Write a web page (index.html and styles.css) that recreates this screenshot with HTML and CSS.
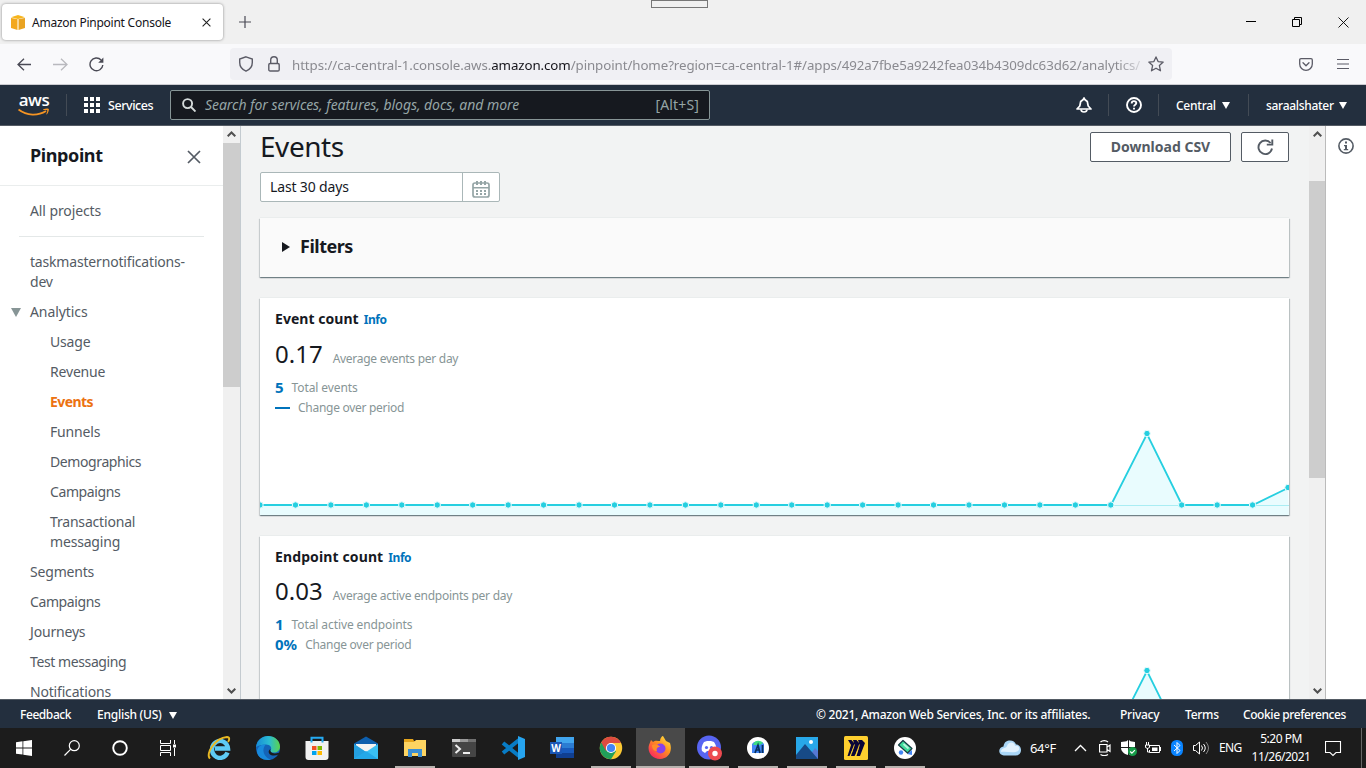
FILE: index.html
```html
<!DOCTYPE html>
<html lang="en">
<head>
<meta charset="utf-8">
<title>Amazon Pinpoint Console</title>
<link rel="stylesheet" href="styles.css">
</head>
<body>
<div class="tabs">
  <div class="tab">
    <svg class="cube" width="14" height="15" viewBox="0 0 14 15"><path d="M0 3v10l6.500 2V4z" fill="#f3a81c"/><path d="M14 3v10l-6.500 2V4z" fill="#e9a322"/><path d="M0 2.300 7 0l7 2.300L7 4z" fill="#f7b51d"/><path d="M6.500 4h1v11h-1z" fill="#fbdc96"/></svg>
    <span class="tab-title">Amazon Pinpoint Console</span>
    <svg width="9" height="9" viewBox="0 0 9 9"><path d="M.6.6l7.800 7.800M8.400.6.6 8.400" stroke="#222" stroke-width="1.100"/></svg>
  </div>
  <svg class="newtab" width="12" height="12" viewBox="0 0 12 12"><path d="M6 0v12M0 6h12" stroke="#4a4a55" stroke-width="1.200"/></svg>
  <div class="share"></div>
  <div class="winbtns">
    <svg width="11" height="11" viewBox="0 0 11 11"><path d="M0 4.500h10" stroke="#000"/></svg>
    <svg width="11" height="11" viewBox="0 0 11 11" fill="none" stroke="#000"><path d="M.5 2.500h7v7h-7zM2.500 2.500v-2h7v7h-2"/></svg>
    <svg width="11" height="11" viewBox="0 0 11 11"><path d="M.5.5l10 10M10.500.5l-10 10" stroke="#000" stroke-width=".9"/></svg>
  </div>
</div>
<div class="toolbar">
  <svg class="back" width="15" height="13" viewBox="0 0 15 13" fill="none" stroke="#4a4a55" stroke-width="1.300"><path d="M7 .8 1 6.500l6 5.700M1 6.500h13"/></svg>
  <svg class="fwd" width="15" height="13" viewBox="0 0 15 13" fill="none" stroke="#b9b9be" stroke-width="1.300"><path d="M8 .8l6 5.700-6 5.700M14 6.500H0"/></svg>
  <svg class="reload" width="15" height="15" viewBox="0 0 15 15" fill="none" stroke="#4a4a55" stroke-width="1.400"><path d="M13.800 8a6.400 6.400 0 1 1-1.700-5"/><path d="M14.400.6v5.200H9.200z" fill="#4a4a55" stroke="none"/></svg>
  <div class="url">
    <svg class="shield" width="16" height="16" viewBox="0 0 16 16" fill="none" stroke="#5b5b66" stroke-width="1.400"><path d="M8 .8 14.300 3v3.500c0 4-2.300 7-6.300 8.700C4 13.500 1.700 10.500 1.700 6.500V3z"/></svg>
    <svg class="lock" width="12" height="16" viewBox="0 0 12 16" fill="none" stroke="#5b5b66" stroke-width="1.400"><rect x=".8" y="7.500" width="10.400" height="7.500" rx="1.300"/><path d="M2.700 7.500V4a3.300 3.300 0 0 1 6.600 0v3.500"/></svg>
    <span class="address">https://ca-central-1.console.aws.<b>amazon.com</b>/pinpoint/home?region=ca-central-1#/apps/492a7fbe5a9242fea034b4309dc63d62/analytics/</span>
    <svg class="star" width="16" height="16" viewBox="0 0 16 16" fill="none" stroke="#5b5b66" stroke-width="1.300" stroke-linejoin="round"><path d="M8 .9l2.100 4.700 5.100.5-3.800 3.500 1.100 5.200L8 12.200l-4.500 2.600 1.100-5.200L.8 6.100l5.100-.5z"/></svg>
  </div>
  <svg class="pocket" width="14" height="13" viewBox="0 0 14 13" fill="none" stroke="#5b5b66" stroke-width="1.300" stroke-linecap="round" stroke-linejoin="round"><path d="M2 .7h10c.8 0 1.300.5 1.300 1.300v4a6.300 6.300 0 0 1-12.600 0V2C.7 1.200 1.200.7 2 .7z"/><path d="M4 4.800l3 3 3-3"/></svg>
  <svg class="menu" width="12" height="11" viewBox="0 0 12 11"><path d="M0 .5h12M0 5h12M0 9.500h12" stroke="#5b5b66" stroke-width="1.200"/></svg>
</div>
<header class="awsnav">
  <div class="logo"><span>aws</span><svg width="32" height="9" viewBox="0 0 32 9"><path d="M.5 1.500C9 8 20 8 28 3" fill="none" stroke="#f59423" stroke-width="1.800"/><path d="M25.200 1.300c3-1.200 5.400-.8 5.600-.3.300.7-.3 3.600-2 5.500l-.5-.2c.6-1.600 1.200-3.400.9-4-.4-.6-2.500-.4-4-.3z" fill="#f59423"/></svg></div>
  <i class="sep"></i>
  <svg class="grid" width="16" height="16" viewBox="0 0 16 16" fill="#fff"><path d="M0 0h4v4H0zM6 0h4v4H6zM12 0h4v4h-4zM0 6h4v4H0zM6 6h4v4H6zM12 6h4v4h-4zM0 12h4v4H0zM6 12h4v4H6zM12 12h4v4h-4z"/></svg>
  <span class="services">Services</span>
  <div class="search">
    <svg width="14" height="14" viewBox="0 0 14 14" fill="none" stroke="#d5dbdb" stroke-width="1.900"><circle cx="5.600" cy="5.600" r="4.500"/><path d="M9 9l4.500 4.500"/></svg>
    <em>Search for services, features, blogs, docs, and more</em><span class="hot">[Alt+S]</span>
  </div>
  <svg class="bell" width="16" height="16" viewBox="0 0 16 16" fill="none" stroke="#fff" stroke-width="1.700" stroke-linejoin="round"><path d="M1 12h14l-2.800-3-.9-4.500L9 2.800 8 1 7 2.800 4.700 4.500 3.800 9z"/><path d="M5 12.500c.3 3.300 5.700 3.300 6 0"/></svg>
  <i class="sep"></i>
  <svg class="help" width="16" height="16" viewBox="0 0 16 16" fill="none" stroke="#fff" stroke-width="1.900"><circle cx="8" cy="8" r="7"/><path d="M5.700 6.400c0-3 4.600-2.900 4.600-.3C10.300 7.800 8 7.600 8 9.600M8 10.800v1.700"/></svg>
  <i class="sep"></i>
  <span class="region">Central</span><svg class="tri" width="8" height="7"><path d="M0 0h8L4 7z" fill="#fff"/></svg>
  <i class="sep s4"></i>
  <span class="user">saraalshater</span><svg class="tri" width="8" height="7"><path d="M0 0h8L4 7z" fill="#fff"/></svg>
</header>
<main class="main">
  <nav class="side">
    <div class="side-head"><h2>Pinpoint</h2><svg width="14" height="14" viewBox="0 0 14 14"><path d="M1 1l12 12M13 1 1 13" stroke="#545b64" stroke-width="1.700"/></svg></div>
    <a class="all">All projects</a>
    <div class="rule"></div>
    <a class="project">taskmasternotifications-<br>dev</a>
    <a class="open"><svg width="10" height="9"><path d="M0 0h10L5 9z" fill="#879596"/></svg>Analytics</a>
    <a class="sub">Usage</a><a class="sub">Revenue</a><a class="sub current">Events</a><a class="sub">Funnels</a><a class="sub tight">Demographics</a><a class="sub tight">Campaigns</a><a class="sub">Transactional<br>messaging</a>
    <a>Segments</a><a class="tight">Campaigns</a><a>Journeys</a><a class="tight">Test messaging</a><a>Notifications</a>
  </nav>
  <div class="scroll scroll-left"><svg width="9" height="6" viewBox="0 0 9 6"><path d="M.7 5.300 4.500 1.500l3.800 3.800" fill="none" stroke="#505050" stroke-width="2"/></svg><div class="thumb"></div><svg width="9" height="6" viewBox="0 0 9 6"><path d="M.7.7l3.800 3.800L8.300.7" fill="none" stroke="#505050" stroke-width="2"/></svg></div>
  <section class="content">
    <div class="title-row"><h1>Events</h1><button class="btn csv">Download CSV</button><button class="btn refresh"><svg width="17" height="17" viewBox="0 0 17 17" fill="none" stroke="#545b64" stroke-width="1.900"><path d="M15 9.500A6.800 6.800 0 1 1 13.600 4"/><path d="M15.300.5v5.100h-5.500"/></svg></button></div>
    <div class="date"><span>Last 30 days</span><div class="cal"><svg width="18" height="17" viewBox="0 0 18 17"><path d="M3 2h12a2 2 0 0 1 2 2v10a2 2 0 0 1-2 2H3a2 2 0 0 1-2-2V4a2 2 0 0 1 2-2z" fill="none" stroke="#95a5a6" stroke-width="1.700"/><path d="M4 0h2v4H4zM8 0h2v4H8zM12 0h2v4h-2zM1 6h16v1.500H1zM4 9h2v2H4zM8 9h2v2H8zM12 9h2v2h-2zM4 12h2v2H4zM8 12h2v2H8zM12 12h2v2h-2z" fill="#95a5a6"/></svg></div></div>
    <div class="card filters"><svg width="8" height="10"><path d="M0 0l8 5-8 5z" fill="#16191f"/></svg><h3>Filters</h3></div>
    <div class="card metric">
      <div class="mhead"><b class="evt">Event count</b><a class="info">Info</a></div>
      <div class="big"><strong>0.17</strong><span class="avg1">Average events per day</span></div>
      <div class="row"><b>5</b><span class="tot1">Total events</span></div>
      <div class="row"><i class="dash"></i><span class="chg">Change over period</span></div>
      <svg class="chart" width="1029" height="90" viewBox="0 0 1029 90"><path d="M0 80H851L887 9 922 80h71L1028 63l1 27H0z" fill="#e9fcfe"/><path d="M851 80.500h71M993 80.500h36" stroke="#a9edf3"/><path d="M0 80H851L887 9 922 80h71l35-17" fill="none" stroke="#26cfe0" stroke-width="1.800"/><g id="dots" fill="#26cfe0" stroke="#e9fcfe" stroke-width="1"></g></svg>
    </div>
    <div class="card metric">
      <div class="mhead"><b class="end">Endpoint count</b><a class="info">Info</a></div>
      <div class="big"><strong>0.03</strong><span class="avg2">Average active endpoints per day</span></div>
      <div class="row"><b>1</b><span class="tot2">Total active endpoints</span></div>
      <div class="row"><b>0%</b><span class="chg">Change over period</span></div>
      <svg class="chart" width="1029" height="90" viewBox="0 0 1029 90"><path d="M0 79H851L887 8 922 79h107v11H0z" fill="#e9fcfe"/><path d="M0 79H851L887 8 922 79h107" fill="none" stroke="#26cfe0" stroke-width="1.800"/><circle cx="887" cy="7.500" r="3.200" fill="#26cfe0" stroke="#e9fcfe" stroke-width="1"/></svg>
    </div>
  </section>
  <div class="scroll scroll-right"><svg width="9" height="6" viewBox="0 0 9 6"><path d="M.7 5.300 4.500 1.500l3.800 3.800" fill="none" stroke="#505050" stroke-width="2"/></svg><div class="thumb"></div><svg width="9" height="6" viewBox="0 0 9 6"><path d="M.7.7l3.800 3.800L8.300.7" fill="none" stroke="#505050" stroke-width="2"/></svg></div>
  <aside class="rail"><svg width="16" height="16" viewBox="0 0 16 16"><circle cx="8" cy="8" r="7.100" fill="none" stroke="#545b64" stroke-width="1.600"/><path d="M7 3.500h2v2H7zM6 7h3v4h1.200v1.300H5.800V11H7V8.200H6z" fill="#545b64"/></svg></aside>
</main>
<footer class="foot"><span class="fb">Feedback</span><span class="lang">English (US)</span><svg class="tri" width="8" height="7"><path d="M0 0h8L4 7z" fill="#fff"/></svg><span class="copy">© 2021, Amazon Web Services, Inc. or its affiliates.</span><span class="priv">Privacy</span><span class="terms">Terms</span><span class="cookie">Cookie preferences</span></footer>
<div class="taskbar">
  <div class="sys"><svg width="16" height="16" viewBox="0 0 16 16" fill="#fff"><path d="M0 2.200 6.500 1.300v6.200H0zM7.300 1.200 16 0v7.500H7.300zM0 8.400h6.500v6.200L0 13.700zM7.300 8.400H16V16l-8.700-1.200z"/></svg></div>
  <div class="sys"><svg width="16" height="16" viewBox="0 0 16 16" fill="none" stroke="#fff" stroke-width="1.200"><circle cx="10.300" cy="5.700" r="5"/><path d="M6.800 9.200.5 15.500"/></svg></div>
  <div class="sys"><svg width="16" height="16" viewBox="0 0 16 16"><circle cx="8" cy="8" r="6.800" fill="none" stroke="#fff" stroke-width="1.900"/></svg></div>
  <div class="sys"><svg width="16" height="16" viewBox="0 0 16 16" fill="none" stroke="#fff"><path d="M.5 0v3.500h10V0M.5 16v-3.500h10V16M.5 5.500h10v5H.5zM14.500 0v4M14.500 8v8"/><path d="M13 4.500h3v3h-3z" fill="#fff" stroke="none"/></svg></div>
  <div class="apps">
    <div class="app"><svg width="24" height="24" viewBox="0 0 24 24"><path d="M20.500 16.500A8 8.500 0 1 1 21 12.500H8" fill="none" stroke="#5ecbf5" stroke-width="4.400"/><path d="M3 22.500C-2 18 8 2 20 1c3 0 2.500 3 1 5" fill="none" stroke="#e9b923" stroke-width="1.900"/></svg></div>
    <div class="app"><svg width="24" height="24" viewBox="0 0 24 24"><defs><linearGradient id="eg"><stop offset="0" stop-color="#168bd8"/><stop offset=".55" stop-color="#2bbcd2"/><stop offset="1" stop-color="#5bd34c"/></linearGradient></defs><circle cx="12" cy="12" r="12" fill="#1464b8"/><path d="M0 11C1 4 6 0 12 0c7 0 12 5 12 10.500 0 4-3 6-6 6-4 0-4-1.500-3-3 1-2-1-5-5-5-4 0-8 1-10 2.500z" fill="url(#eg)"/><path d="M1 16c0-5 4-8 9-7.500-4 3-4 12 5 15.200C8 25 2 22 1 16z" fill="#1889dc"/><path d="M14.500 13c-1 3 2 6 9 3.500l-1 2c-3 1.500-7 1.500-9-.5-1.500-2-1-4 1-5z" fill="#1b1b1b"/></svg></div>
    <div class="app"><svg width="24" height="24" viewBox="0 0 24 24"><path d="M6.500 6V1.700h11V6" fill="none" stroke="#25aaf2" stroke-width="2"/><path d="M.5 5h23v16a3 3 0 0 1-3 3h-17a3 3 0 0 1-3-3z" fill="#f1f1f1"/><path d="M5.500 5h2v1.500h-2zM16.500 5h2v1.500h-2z" fill="#25aaf2"/><path d="M7 10h4.500v4H7z" fill="#f25022"/><path d="M12.500 10H17v4h-4.500z" fill="#7fba00"/><path d="M7 15h4.500v4H7z" fill="#00a4ef"/><path d="M12.500 15H17v4h-4.500z" fill="#ffb900"/></svg></div>
    <div class="app"><svg width="24" height="24" viewBox="0 0 24 24"><path d="M0 7.500 12 .5l12 7V16H0z" fill="#0d5fae"/><path d="M2 8h20v9H2z" fill="#f3f3f3"/><path d="M0 8l12 8L24 8v15H0z" fill="#39bff3"/><path d="M0 8l12 8-12 7z" fill="#249fdf"/><path d="M0 23l12-8 12 8z" fill="#24a8e8"/></svg></div>
    <div class="app run"><svg width="24" height="24" viewBox="0 0 24 24"><path d="M1 3h9l1 2h12v15H1z" fill="#e6a51c"/><path d="M1 6h10l2-2h10v16H1z" fill="#fdd462"/><path d="M5 21v-8h14v8h-4v-4H9v4z" fill="#3b8fd4"/></svg></div>
    <div class="app"><svg width="24" height="24" viewBox="0 0 24 24"><rect y="3" width="24" height="18" rx="1" fill="#454545"/><path d="M0 3h8v3H0z" fill="#ccc"/><path d="M8 3h8v3H8z" fill="#999"/><path d="M16 3h8v3h-8z" fill="#707070"/><path d="M3.500 9l4.500 4-4.500 4M11 17h7" fill="none" stroke="#eee" stroke-width="2"/></svg></div>
    <div class="app"><svg width="24" height="24" viewBox="0 0 24 24"><path d="M18 4 2 17M18 20 2 7" stroke="#087cc5" stroke-width="4"/><path d="M17 0l7 3v18l-7 3z" fill="#26a4ef"/></svg></div>
    <div class="app"><svg width="24" height="24" viewBox="0 0 24 24"><path d="M6 1h18v6H6z" fill="#41a5ee"/><path d="M6 7h18v5H6z" fill="#2b7cd3"/><path d="M6 12h18v5H6z" fill="#185abd"/><path d="M6 17h18v5H6z" fill="#103f91"/><path d="M0 6h12v12H0z" fill="#1b57b6"/><text x="6" y="15.700" font-size="10" text-anchor="middle" font-weight="bold" fill="#fff">W</text></svg></div>
    <div class="app run"><svg width="24" height="24" viewBox="0 0 24 24"><circle cx="12" cy="12" r="11.200" fill="#fbc934"/><path d="M12 12 2.300 6.400A11.200 11.200 0 0 0 12 23.200l5-8z" fill="#21a05a"/><path d="M12 12 7 15 2.300 6.400A11.200 11.200 0 0 1 22 7H12z" fill="#dd4b3f"/><circle cx="12" cy="12" r="5.100" fill="#fff"/><circle cx="12" cy="12" r="4.100" fill="#4285f4"/></svg></div>
    <div class="app run active"><svg width="24" height="24" viewBox="0 0 24 24"><defs><linearGradient id="fg" x1="1" y1="0" x2=".2" y2="1"><stop offset="0" stop-color="#fff14a"/><stop offset=".45" stop-color="#ff951e"/><stop offset="1" stop-color="#fa2063"/></linearGradient></defs><path d="M3 4l2 2c2-2 5-1 7-1 0-3 2-5 3-5l3 5 4 2c3 9-2 16-10 16S-1 16 1 9z" fill="url(#fg)"/><circle cx="12.500" cy="12.500" r="5" fill="#8742e8"/><path d="M4 9c4-1 7 0 8 2-3 0-4 2-3 4-3 0-5-2-5-6z" fill="#ff8d2a"/></svg></div>
    <div class="app run"><svg width="26" height="26" viewBox="0 0 26 26"><circle cx="13" cy="12.500" r="12" fill="#5865f2"/><path d="M8 7l3-1h4l3 1c2 3 3 6 2 9l-3 2-2-2h-4l-2 2-3-2c-1-3 0-6 2-9z" fill="#fff"/><circle cx="10.500" cy="12.500" r="1.600" fill="#5865f2"/><circle cx="15.500" cy="12.500" r="1.600" fill="#5865f2"/><circle cx="19" cy="18.500" r="7" fill="#ed4a50"/><circle cx="19" cy="18.500" r="2.700" fill="#fff"/></svg></div>
    <div class="app run"><svg width="24" height="24" viewBox="0 0 24 24"><circle cx="12" cy="12" r="11" fill="#fff"/><path d="M6 8l2-2h8l2 2v9H6z" fill="#4285f4"/><path d="M8 7c1-3 7-3 9 0l-3 2H7z" fill="#3ddc84"/><path d="M9 17l3-8 2 8M10 14h4M16.500 9v8" fill="none" stroke="#07305d" stroke-width="1.700"/></svg></div>
    <div class="app run"><svg width="24" height="24" viewBox="0 0 24 24"><path d="M1 1h22v22H1z" fill="#28a8e9"/><path d="M12 23l8-11 3 3v8z" fill="#5679d3"/><path d="M1 19 10 8l13 15H1z" fill="#174a86"/><circle cx="16" cy="6" r="2" fill="#fff"/></svg></div>
    <div class="app run"><svg width="24" height="24" viewBox="0 0 24 24"><rect width="24" height="24" rx="1.500" fill="#ffd02f"/><path d="M4 4h3.500l2.500 3-1-3h3.500l2.500 3-1-3h4l3 3-5 13h-3.500l3-10-5 10H7l3-10-4.500 10H3.500L7 9z" fill="#090437"/><path d="M10.500 8.500 7.500 17M15.500 8.500 12.500 17" stroke="#ffd02f" stroke-width=".9"/></svg></div>
    <div class="app run"><svg width="24" height="24" viewBox="0 0 24 24"><circle cx="12" cy="12" r="11" fill="#fff"/><circle cx="8" cy="16.500" r="2.200" fill="#4285f4"/><path d="M14 18l5-4v5z" fill="#4285f4"/><path d="M10 4.500l9 8-4.500 4.500-9-8z" fill="#3ddc9b" stroke="#173c45" stroke-width="1.200" stroke-linejoin="round"/><path d="M10.500 8l5 4.500" stroke="#b5f5da" stroke-width="2"/></svg></div>
  </div>
  <div class="tray">
    <svg width="22" height="16" viewBox="0 0 22 16"><path d="M5 15.500a4.500 4.500 0 0 1-.5-9C5 2 8 .5 11 .5c3 0 5 1.500 6 4 3 0 5 2.500 5 5.500 0 3-2 5.500-5 5.500z" fill="#a9d6f7"/><path d="M2 12C2 7 7 9 8 6c2-5 8-4 8 0 3-1 5 1 4 4-3 4-12 1-18 2z" fill="#e1f2ff"/></svg>
    <span class="temp">64°F</span>
    <svg class="t1" width="13" height="8" viewBox="0 0 13 8"><path d="M1 7l5.500-5.500L12 7" fill="none" stroke="#fff" stroke-width="1.300"/></svg>
    <svg class="t2" width="12" height="16" viewBox="0 0 12 16" fill="none" stroke="#fff"><path d="M.5 4.500h7.500v7.500H.5zM8 7l3-2v6.500l-3-2M1.500 2c2-1.800 5.500-1.800 7.500 0M1.500 14.500c2 1.500 5.500 1.500 7.500 0" stroke-width="1.200"/></svg>
    <svg class="t3" width="16" height="16" viewBox="0 0 16 16"><path d="M7 0 5.500 1.200 0 2v5h7zM8 0v7h6V2L9.500 1.200zM0 8c0 3 3 6 7 7V8zM8 8h6l-3 5-3 2z" fill="#fff"/><circle cx="11.500" cy="11.500" r="4.500" fill="#169c48"/><path d="M9.200 11.500l1.700 1.700 3-3" fill="none" stroke="#fff" stroke-width="1.200"/></svg>
    <svg class="t4" width="16" height="12" viewBox="0 0 16 12" fill="none" stroke="#fff"><path d="M5 3.500h9.500v7h-10V8M15.500 5v4M1.500 0v3M3.500 0v3M.5 3h4v2.500l-2 1-2-1zM2.500 6v4h2"/><path d="M7 5.500h5.500v3.500H7z" fill="#fff" stroke="none"/></svg>
    <svg class="t5" width="12" height="16" viewBox="0 0 12 16"><rect width="12" height="16" rx="5.500" fill="#0a84ff"/><path d="M3 5l6 5.500L6 13.500v-11l3 3L3 11" fill="none" stroke="#fff"/></svg>
    <svg class="t6" width="17" height="14" viewBox="0 0 17 14" fill="none" stroke="#fff"><path d="M.5 4.500h2l4-3.500v12l-4-3.500h-2zM8.500 4.500q2 2.500 0 5M10.500 3q3.500 4 0 8"/><path d="M13 1q5 6 0 12" stroke="#888"/></svg>
    <span class="eng">ENG</span>
    <div class="clock"><span>5:20 PM</span><span class="day">11/26/2021</span></div>
    <svg class="t7" width="17" height="17" viewBox="0 0 17 17"><path d="M.5 1.500h15v11H11L8 15.500 5 12.500H.5z" fill="none" stroke="#fff" stroke-width="1.100"/></svg>
    <i class="peek"></i>
  </div>
</div>
<script src="chart.js"></script>
</body>
</html>
```
FILE: chart.js
```js
// Daily markers of the event count series.
const dots = document.getElementById("dots");
for (let day = 0; day < 30; day++) {
  const dot = document.createElementNS("http://www.w3.org/2000/svg", "circle");
  dot.setAttribute("cx", day === 25 ? 887 : day * 35.45);
  dot.setAttribute("cy", day === 25 ? 8.5 : day === 29 ? 62.5 : 80);
  dot.setAttribute("r", 3.2);
  dots.appendChild(dot);
}
```
FILE: styles.css
```css
* { box-sizing: border-box; }
body { margin: 0; width: 1366px; height: 768px; overflow: hidden; display: flex; flex-direction: column; font: 14px/20px "Noto Sans", sans-serif; color: #16191f; }
svg { display: block; flex: none; }
span, b, a, em { white-space: nowrap; }
h1, h2, h3 { margin: 0; }
.tabs { height: 44px; flex: none; background: #f0f0f0; display: flex; align-items: center; position: relative; }
.tab { width: 221px; height: 36px; margin-left: 2px; background: #fff; border-radius: 4px; box-shadow: 0 0 3px #888; display: flex; align-items: center; padding: 0 12px 0 9px; }
.tab-title { margin-left: 7px; width: 171px; font-size: 12px; color: #15141a; letter-spacing: -.24px; padding-top: 2px; }
.newtab { margin-left: 16px; }
.share { position: absolute; left: 651px; top: 0; width: 57px; height: 8px; border: 1px solid #777; }
.winbtns { margin-left: auto; display: flex; gap: 35px; margin-right: 17px; }
.toolbar { height: 41px; flex: none; background: #f9f9fb; border-bottom: 1px solid #ccccd1; display: flex; align-items: center; }
.back { margin-left: 17px; }
.fwd { margin-left: 21px; }
.reload { margin-left: 21px; }
.url { margin-left: 126px; width: 942px; height: 32px; border-radius: 4px; background: #f0f0f4; display: flex; align-items: center; padding: 0 8px; }
.lock { margin-left: 14px; }
.address { margin-left: 12px; width: 850px; overflow: hidden; color: #8a8a90; font-size: 13.300px; letter-spacing: -.08px; padding-top: 2px; mask-image: linear-gradient(to right, #000 825px, transparent 856px); }
.address b { color: #15141a; font-weight: 400; }
.star { margin-left: 6px; }
.pocket { margin-left: 127px; }
.menu { margin-left: 24px; }
.awsnav { height: 41px; flex: none; background: #232f3e; border-bottom: 1px solid #545b64; display: flex; align-items: center; color: #fff; font-size: 13px; font-weight: 500; }
.logo { margin-left: 18px; width: 32px; height: 24px; }
.logo span { display: block; font: 600 17px/13px "Open Sans", sans-serif; height: 15px; text-align: center; letter-spacing: -.5px; }
.sep { width: 1px; height: 22px; background: #434b55; }
.logo + .sep { margin-left: 16px; }
.grid { margin-left: 17px; }
.services, .region, .user { padding-top: 2px; }
.services { margin-left: 8px; width: 46px; font-size: 12.500px; letter-spacing: -.45px; }
.search { margin-left: 16px; width: 540px; height: 30px; background: #16191f; border: 1px solid #879596; border-radius: 2px; display: flex; align-items: center; padding: 0 10px 0 11px; color: #95a5a6; font-size: 14px; font-weight: 400; }
.search em { margin-left: 9px; letter-spacing: -.05px; }
.hot { margin-left: auto; letter-spacing: .15px; }
.bell { margin-left: 366px; }
.bell + .sep { margin-left: 16px; }
.help { margin-left: 17px; }
.help + .sep { margin-left: 16px; }
.region { margin-left: 17px; width: 40px; font-size: 12px; letter-spacing: -.25px; }
.tri { margin-left: 6px; }
.s4 { margin-left: 18px; }
.user { margin-left: 17px; width: 67px; font-size: 12px; letter-spacing: -.3px; }
.main { height: 573px; flex: none; display: flex; overflow: hidden; }
.side { width: 223px; overflow: hidden; background: #fff; color: #545b64; letter-spacing: -.18px; }
.side-head { height: 60px; border-bottom: 1px solid #eaeded; display: flex; align-items: center; justify-content: space-between; padding: 2px 22px 0 30px; }
.side-head h2 { font-size: 18px; line-height: 22px; color: #16191f; letter-spacing: -.4px; padding-bottom: 3px; }
.side a { display: block; padding: 5px 0 5px 30px; }
.side .all { padding-top: 15px; padding-bottom: 15px; letter-spacing: -.1px; }
.rule { height: 1px; margin: 0 19px; background: #e4e8e8; }
.side .project { padding-top: 15px; }
.side .open { display: flex; align-items: center; padding-left: 11px; gap: 9px; letter-spacing: -.08px; }
.side .sub { padding-left: 50px; }
.side .tight { letter-spacing: -.4px; }
.side .current { color: #ec7211; font-weight: 700; letter-spacing: -.55px; }
.scroll { width: 17px; background: #f0f0f0; display: flex; flex-direction: column; align-items: center; justify-content: space-between; padding: 5px 0; }
.thumb { width: 100%; background: #cdcdcd; }
.scroll-left { width: 18px; border-right: 1px solid #c4cbd0; }
.scroll-left .thumb { height: 244px; margin: 6px 0 auto; }
.scroll-right { border-right: 1px solid #bbb; }
.scroll-right .thumb { height: 297px; margin: 44px 0 auto; }
.content { width: 1068px; background: #f2f3f3; padding: 0 20px 0 19px; overflow: hidden; }
.title-row { height: 46px; display: flex; align-items: flex-start; padding-top: 6px; }
h1 { font-size: 28px; line-height: 32px; font-weight: 400; margin: -2px auto 0 0; letter-spacing: -.45px; }
.btn { height: 30px; border: 1px solid #545b64; border-radius: 2px; background: #fff; color: #545b64; font: 700 14px/20px "Noto Sans", sans-serif; padding: 0; display: flex; align-items: center; justify-content: center; }
.csv { width: 141px; margin-right: 10px; }
.refresh { width: 48px; }
.date { width: 240px; height: 30px; border: 1px solid #aab7b8; border-radius: 2px; background: #fff; display: flex; align-items: center; padding-left: 9px; letter-spacing: -.15px; }
.cal { margin-left: auto; width: 37px; height: 28px; border-left: 1px solid #aab7b8; padding: 8px 0 0 9px; }
.card { width: 1029px; background: #fff; box-shadow: 0 1px 1px rgba(0,28,36,.35), 1px 1px 1px rgba(0,28,36,.18), -1px 1px 1px rgba(0,28,36,.12), 0 -1px #eaeded; }
.filters { height: 59px; margin-top: 16px; background: #fafafa; display: flex; align-items: center; padding: 0 0 1px 22px; gap: 10px; }
h3 { font-size: 18px; line-height: 22px; letter-spacing: -.5px; padding-bottom: 2px; }
.metric { height: 217px; margin-top: 21px; padding: 11px 15px; position: relative; }
.mhead { display: flex; gap: 5px; height: 20px; letter-spacing: .04px; }
.end { letter-spacing: .12px; }
.info { color: #0073bb; font-size: 12px; font-weight: 700; line-height: 22px; letter-spacing: -.45px; }
.big { height: 32px; margin-top: 9px; display: flex; align-items: baseline; gap: 10px; }
.big strong { font-size: 24px; line-height: 32px; font-weight: 400; letter-spacing: 0; }
.big span, .row span { color: #879596; font-size: 12px; }
.avg1, .chg { letter-spacing: -.28px; }
.avg2 { letter-spacing: -.25px; }
.tot1, .tot2 { letter-spacing: -.1px; }
.row { height: 20px; display: flex; align-items: center; gap: 8px; color: #0073bb; }
.row b { font-size: 15px; padding-bottom: 2px; }
.big + .row { margin-top: 8px; }
.metric + .metric .big { margin-top: 8px; }
.dash { width: 15px; height: 2px; background: #0073bb; }
.chart { position: absolute; left: 0; bottom: 0; }
.rail { width: 40px; background: #fff; padding: 12px 0 0 12px; }
.foot { height: 29px; flex: none; background: #232f3e; border-top: 1px solid #545b64; display: flex; align-items: center; color: #fff; font-size: 12px; font-weight: 500; padding: 2px 20px 0; letter-spacing: -.25px; }
.foot .fb, .foot .cookie { letter-spacing: -.42px; }
.fb { width: 77px; }
.lang { width: 66px; }
.copy { margin-left: auto; width: 275px; }
.priv { margin-left: 29px; width: 40px; }
.terms { margin-left: 25px; width: 33px; }
.cookie { margin-left: 25px; width: 103px; }
.taskbar { height: 40px; flex: none; background: #1c1c1c; display: flex; color: #fff; }
.sys { width: 48px; display: flex; align-items: center; justify-content: center; }
.apps { display: flex; margin-left: 3px; width: 736px; }
.app { width: 49px; height: 40px; flex: none; display: flex; align-items: center; justify-content: center; padding-right: 2px; position: relative; }
.run::after { content: ""; position: absolute; left: 4px; bottom: 0; width: 40px; height: 2px; background: #b8b3af; }
.active { background: #494949; }
.active::after { left: 0; width: 49px; }
.tray { margin-left: 68px; display: flex; align-items: center; font-size: 12px; }
.temp { margin-left: 9px; width: 27px; font-size: 13px; letter-spacing: -.35px; }
.t1 { margin-left: 17px; } .t2 { margin-left: 12px; } .t3 { margin-left: 10px; } .t4 { margin-left: 8px; } .t5 { margin-left: 10px; } .t6 { margin-left: 10px; }
.eng { margin-left: 9px; width: 24px; letter-spacing: -.6px; }
.clock { margin-left: 9px; width: 58px; display: flex; flex-direction: column; align-items: center; line-height: 18px; letter-spacing: -.5px; }
.t7 { margin-left: 15px; }
.peek { margin-left: 19px; width: 1px; height: 40px; background: #666; }
```
